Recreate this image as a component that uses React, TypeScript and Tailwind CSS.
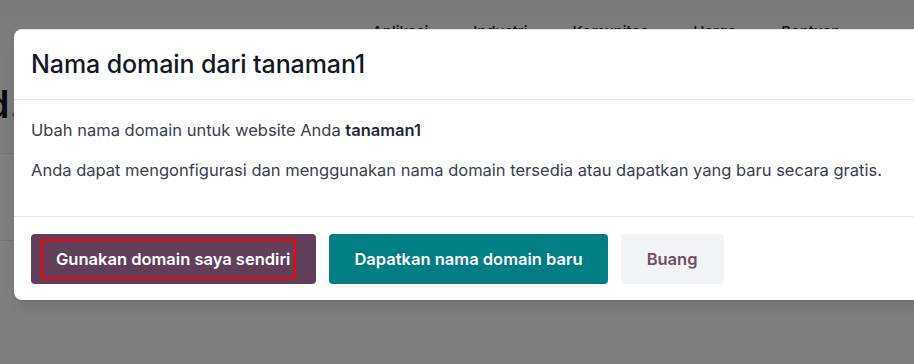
import React from 'react';

const navItems = ['Aplikasi', 'Industri', 'Komunitas', 'Harga', 'Bantuan'];

function PageBehind() {
  return (
    <div className="h-full bg-white">
      {/* Header */}
      <div className="h-[27px] bg-[#f5f6f4]" />
      <div className="h-[133px] border-b border-[#e5e7eb] bg-[#f7f8f6] relative">
        <div className="flex gap-[45px] pl-[372px] -mt-[6px] text-[15px] font-medium text-[#1f2937]">
          {navItems.map(item => (
            <span key={item}>{item}</span>
          ))}
        </div>
        <div className="absolute left-[-48px] top-[64px] text-[38px] font-semibold text-[#111827] leading-none">
          Ind<span className="text-[#e0711c]">.</span>
        </div>
      </div>
      <div className="h-[87px] border-b border-[#e5e7eb]" />
    </div>
  );
}

function DomainModal() {
  return (
    <div className="absolute left-[14px] top-[29px] w-[940px] rounded-l-lg bg-white border-t border-[#e5e7eb] shadow-lg">
      {/* Header */}
      <div className="h-[70px] flex items-center px-[17px] border-b border-[#e5e7eb]">
        <h1 className="text-[25px] font-medium text-[#111827] tracking-[-0.1px]">Nama domain dari tanaman1</h1>
      </div>

      {/* Body */}
      <div className="px-[17px] pt-[18px] pb-[34px] text-[16.5px] text-[#374151] leading-[24px]">
        <p className="mb-[16px]">
          Ubah nama domain untuk website Anda <strong className="font-semibold text-[#1f2937]">tanaman1</strong>
        </p>
        <p>Anda dapat mengonfigurasi dan menggunakan nama domain tersedia atau dapatkan yang baru secara gratis.</p>
      </div>

      {/* Footer */}
      <div className="flex gap-[13px] px-[17px] pt-[17px] pb-[16px] border-t border-[#e5e7eb]">
        <button className="h-[50px] flex items-center pl-[10px] pr-[20px] rounded bg-[#613f5a] text-white text-[16.5px] font-semibold">
          <span className="h-[40px] flex items-center pl-[13px] pr-[4px] border-2 border-[#ff0000]">
            Gunakan domain saya sendiri
          </span>
        </button>
        <button className="h-[50px] px-[25px] rounded bg-[#017e84] text-white text-[16.5px] font-semibold">
          Dapatkan nama domain baru
        </button>
        <button className="h-[50px] px-[26px] rounded bg-[#f3f4f6] text-[#714b67] text-[16.5px] font-semibold">
          Buang
        </button>
      </div>
    </div>
  );
}

export default function App() {
  return (
    <div className="relative h-[364px] w-[914px] overflow-hidden font-['Inter',sans-serif]">
      <PageBehind />
      <div className="absolute inset-0 bg-black/50" />
      <DomainModal />
    </div>
  );
}
